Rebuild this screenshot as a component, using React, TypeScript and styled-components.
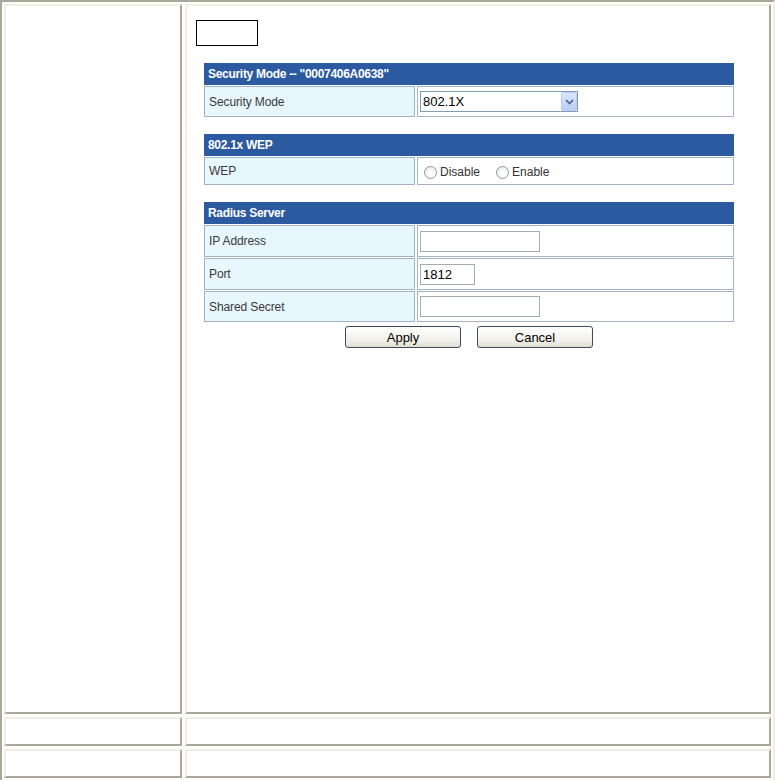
import styled, { createGlobalStyle } from 'styled-components';

const GlobalStyle = createGlobalStyle`
	html, body {
		margin: 0;
		padding: 0;
		background: #ffffff;
	}
	body {
		font-family: 'Liberation Sans', Arial, sans-serif;
	}
`;

const Frame = styled.div`
	box-sizing: border-box;
	width: 775px;
	border-top: 2px solid #aca899;
	border-left: 2px solid #aca899;
	border-right: 2px solid #f1efe2;
	border-bottom: 2px solid #f1efe2;
	padding: 2px;
	display: grid;
	grid-template-columns: 178px 1fr;
	grid-template-rows: 710px 29px 29px;
	gap: 3px 3px;
`;

const Cell = styled.div`
	box-sizing: border-box;
	border-top: 2px solid #f1efe2;
	border-left: 2px solid #f1efe2;
	border-right: 2px solid #aca899;
	border-bottom: 2px solid #aca899;
	background: #ffffff;
`;

const Content = styled.div`
	padding: 14px 0 0 9px;
`;

const LogoBox = styled.div`
	width: 60px;
	height: 24px;
	border: 1px solid #000000;
`;

const Form = styled.div`
	width: 530px;
	margin: 17px 0 0 8px;
`;

const Section = styled.div<{ $last?: boolean }>`
	margin-bottom: ${p => (p.$last ? 0 : 17)}px;
`;

const Header = styled.div`
	height: 22px;
	line-height: 22px;
	background: #2c5aa0;
	color: #ffffff;
	font-size: 12px;
	font-weight: bold;
	padding-left: 4px;
	letter-spacing: -0.3px;
	border-bottom: 1px solid #ffffff;
`;

const Row = styled.div<{ $h: number }>`
	display: grid;
	grid-template-columns: 211px 1fr;
	column-gap: 2px;
	height: ${p => p.$h}px;
	margin-bottom: 1px;
`;

const LabelCell = styled.div`
	box-sizing: border-box;
	border: 1px solid #a3b3c4;
	background: #e8f6fe;
	color: #3a3a3a;
	font-size: 12px;
	letter-spacing: -0.1px;
	padding-left: 4px;
	display: flex;
	align-items: center;
`;

const ValueCell = styled.div`
	box-sizing: border-box;
	border: 1px solid #a3b3c4;
	background: #ffffff;
	display: flex;
	align-items: center;
	padding-left: 2px;
	font-size: 12px;
	color: #333333;
`;

const SelectBox = styled.div`
	position: relative;
	width: 158px;
	height: 21px;
`;

const Select = styled.select`
	appearance: none;
	box-sizing: border-box;
	width: 158px;
	height: 21px;
	border: 1px solid #7f9db9;
	background: #ffffff;
	font-family: 'Liberation Sans', Arial, sans-serif;
	font-size: 13px;
	color: #000000;
	padding: 0 0 0 2px;
	outline: none;
`;

const ArrowBtn = styled.span`
	position: absolute;
	right: 1px;
	top: 1px;
	width: 16px;
	height: 19px;
	box-sizing: border-box;
	border: 1px solid #b9cdf1;
	border-radius: 2px;
	background: linear-gradient(#dbe6fb, #b9cdf6);
	display: flex;
	align-items: center;
	justify-content: center;
	pointer-events: none;
`;

const RadioLabel = styled.label`
	display: inline-flex;
	align-items: center;
	margin-right: 12px;
	font-size: 12px;
	color: #333333;
	margin-top: 2px;
`;

const Radio = styled.input`
	appearance: none;
	width: 13px;
	height: 13px;
	margin: 0 3px 0 4px;
	border: 1px solid #8f9aa5;
	border-radius: 50%;
	background: radial-gradient(circle at 60% 60%, #ffffff 30%, #dcdcd4 100%);
`;

const TextInput = styled.input<{ $w: number }>`
	box-sizing: border-box;
	width: ${p => p.$w}px;
	height: 21px;
	border: 1px solid #a5acb2;
	font-family: 'Liberation Sans', Arial, sans-serif;
	font-size: 13px;
	padding: 0 2px;
	color: #000000;
	outline: none;
`;

const ButtonRow = styled.div`
	display: flex;
	justify-content: center;
	gap: 16px;
	margin-top: 4px;
`;

const Button = styled.button`
	box-sizing: border-box;
	width: 116px;
	height: 22px;
	border: 1px solid #3d4b5c;
	border-radius: 3px;
	background: linear-gradient(#ffffff, #f0efe8 70%, #dedcd0);
	font-family: 'Liberation Sans', Arial, sans-serif;
	font-size: 13px;
	color: #000000;
	padding: 0;
`;

export default function App() {
	return (
		<>
			<GlobalStyle />
			<Frame>
				<Cell />
				<Cell>
					<Content>
						<LogoBox />
						<Form>
							<Section>
								<Header>Security Mode -- "0007406A0638"</Header>
								<Row $h={31}>
									<LabelCell>Security Mode</LabelCell>
									<ValueCell>
										<SelectBox>
											<Select defaultValue="8021x">
												<option value="8021x">802.1X</option>
											</Select>
											<ArrowBtn>
												<svg width="9" height="6" viewBox="0 0 9 6">
													<path d="M1 1 L4.5 4.5 L8 1" fill="none" stroke="#4d6185" strokeWidth="1.6" />
												</svg>
											</ArrowBtn>
										</SelectBox>
									</ValueCell>
								</Row>
							</Section>
							<Section>
								<Header>802.1x WEP</Header>
								<Row $h={28}>
									<LabelCell>WEP</LabelCell>
									<ValueCell>
										<RadioLabel>
											<Radio type="radio" name="wep" />
											Disable
										</RadioLabel>
										<RadioLabel>
											<Radio type="radio" name="wep" />
											Enable
										</RadioLabel>
									</ValueCell>
								</Row>
							</Section>
							<Section $last>
								<Header>Radius Server</Header>
								<Row $h={32}>
									<LabelCell>IP Address</LabelCell>
									<ValueCell>
										<TextInput $w={120} />
									</ValueCell>
								</Row>
								<Row $h={32}>
									<LabelCell>Port</LabelCell>
									<ValueCell>
										<TextInput $w={55} defaultValue="1812" />
									</ValueCell>
								</Row>
								<Row $h={31}>
									<LabelCell>Shared Secret</LabelCell>
									<ValueCell>
										<TextInput $w={120} type="password" />
									</ValueCell>
								</Row>
							</Section>
							<ButtonRow>
								<Button>Apply</Button>
								<Button>Cancel</Button>
							</ButtonRow>
						</Form>
					</Content>
				</Cell>
				<Cell />
				<Cell />
				<Cell />
				<Cell />
			</Frame>
		</>
	);
}
